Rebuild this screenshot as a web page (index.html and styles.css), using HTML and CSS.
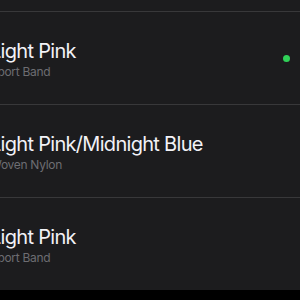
FILE: index.html
```html
<!DOCTYPE html>
<html>
<head>
<meta charset="utf-8">
<link rel="stylesheet" href="styles.css">
</head>
<body>
<div class="screen">
  <div class="top"></div>
  <div class="row">
    <div class="text">
      <div class="title">Light Pink</div>
      <div class="sub">Sport Band</div>
    </div>
    <span class="dot"></span>
  </div>
  <div class="row">
    <div class="text">
      <div class="title">Light Pink/Midnight Blue</div>
      <div class="sub">Woven Nylon</div>
    </div>
  </div>
  <div class="row">
    <div class="text">
      <div class="title">Light Pink</div>
      <div class="sub">Sport Band</div>
    </div>
  </div>
</div>
<div class="bottom"></div>
</body>
</html>
```
FILE: styles.css
```css
html, body {
  margin: 0;
  padding: 0;
  background: #000;
  overflow: hidden;
}
.screen {
  background: #1c1c1e;
  width: 300px;
  font-family: Inter, "Noto Sans", sans-serif;
}
.top {
  height: 11px;
}
.row {
  height: 92px;
  border-top: 1px solid #38383a;
  display: flex;
  align-items: center;
  justify-content: space-between;
  padding-right: 10px;
}
.text {
  margin-left: -10px;
  padding-top: 2px;
  display: flex;
  flex-direction: column;
  gap: 1px;
}
.title {
  color: #f2f2f7;
  font-size: 20px;
  line-height: 24px;
  letter-spacing: -0.7px;
  white-space: nowrap;
}
.sub {
  color: #6d6d72;
  font-size: 12px;
  line-height: 15px;
  letter-spacing: -0.3px;
  white-space: nowrap;
}
.dot {
  width: 7px;
  height: 7px;
  border-radius: 50%;
  background: #30d158;
  flex: none;
}
.bottom {
  height: 10px;
  background: #000;
}
```
